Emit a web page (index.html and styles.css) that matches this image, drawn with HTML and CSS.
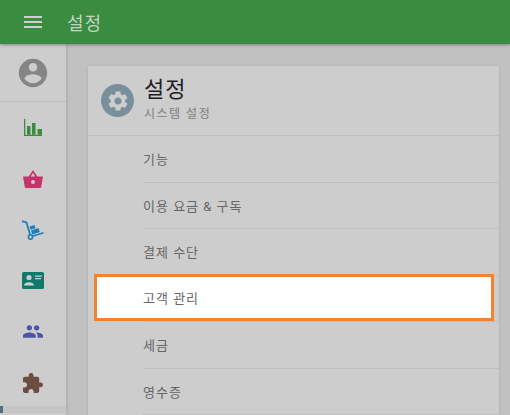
FILE: index.html
```html
<!DOCTYPE html>
<html lang="ko">
<head>
  <meta charset="UTF-8">
  <title>설정</title>
  <link rel="stylesheet" href="styles.css">
</head>
<body>

  <header class="topbar">
    <svg class="menu-icon" viewBox="0 0 24 24" width="24" height="24"><path d="M3 18h18v-2H3v2zm0-5h18v-2H3v2zm0-7v2h18V6H3z"/></svg>
    <span class="topbar-title">설정</span>
  </header>

  <div class="layout">
    <nav class="sidebar">
      <div class="side-profile">
        <svg viewBox="0 0 24 24" width="34" height="34" fill="#858585"><path d="M12 2C6.48 2 2 6.48 2 12s4.48 10 10 10 10-4.48 10-10S17.52 2 12 2zm0 3c1.66 0 3 1.34 3 3s-1.34 3-3 3-3-1.34-3-3 1.34-3 3-3zm0 14.2c-2.5 0-4.71-1.28-6-3.22.03-1.99 4-3.08 6-3.08s5.97 1.09 6 3.08c-1.29 1.94-3.5 3.22-6 3.22z"/></svg>
      </div>
      <a class="side-item">
        <svg viewBox="0 0 18 17" width="18" height="17" fill="#3a8c40"><path d="M0 0h1.300v15.700H18V17H0z"/><path d="M3 7h3.500v8.700H3zM8 4h3.500v11.700H8zM13.500 10H18v5.700h-4.500z"/></svg>
      </a>
      <a class="side-item">
        <svg viewBox="0 0 20 18" width="20" height="18" fill="#c8326b"><path d="M10 0 5.700 6.500H0L1.800 17c.1.600.6 1 1.200 1h14c.6 0 1.100-.4 1.200-1L20 6.500h-5.700zM10 3l2.200 3.500H7.800zm0 7a2 2 0 1 1 0 4 2 2 0 0 1 0-4z" fill-rule="evenodd"/></svg>
      </a>
      <a class="side-item">
        <svg viewBox="0 0 22 20" width="22" height="20" fill="#1f80bd"><path d="M0 1.200 4.500 2.400 8 14.500" fill="none" stroke="#1f80bd" stroke-width="1.800"/><path d="M10.300 16.200 21.500 12.700" fill="none" stroke="#1f80bd" stroke-width="1.600"/><circle cx="8.500" cy="17" r="2.100" fill="none" stroke="#1f80bd" stroke-width="1.600"/><path d="m7.500 6.500 5-1.500 1 3.200-5 1.500zM9 10.500l7.500-2.400 1.300 4-7.500 2.400z"/></svg>
      </a>
      <a class="side-item">
        <svg viewBox="0 0 22 17" width="22" height="17"><rect width="22" height="17" rx="1.500" fill="#0f7a6b"/><circle cx="7" cy="5.500" r="2.600" fill="#cdcdcd"/><path d="M2 13.500c0-2.200 3-3.300 5-3.300s5 1.100 5 3.300z" fill="#cdcdcd"/><path d="M13 3.500h7v1.200h-7zM13 6h6v1.200h-6z" fill="#cdcdcd"/></svg>
      </a>
      <a class="side-item">
        <svg viewBox="1 5 22 14" width="20" height="13" fill="#4a55a5"><path d="M16 11c1.660 0 2.990-1.340 2.990-3S17.660 5 16 5s-3 1.340-3 3 1.340 3 3 3zm-8 0c1.660 0 2.990-1.340 2.990-3S9.660 5 8 5 5 6.340 5 8s1.340 3 3 3zm0 2c-2.330 0-7 1.170-7 3.500V19h14v-2.500c0-2.330-4.670-3.500-7-3.500zm8 0c-.29 0-.62.020-.97.050 1.160.84 1.970 1.970 1.970 3.450V19h6v-2.500c0-2.330-4.670-3.500-7-3.500z"/></svg>
      </a>
      <a class="side-item">
        <svg viewBox="2 1 21 21" width="20" height="20" fill="#6d4c41"><path d="M20.500 11H19V7c0-1.100-.9-2-2-2h-4V3.500a2.500 2.500 0 0 0-5 0V5H4c-1.100 0-1.990.9-1.990 2v3.800H3.500c1.490 0 2.700 1.210 2.700 2.700s-1.210 2.700-2.700 2.700H2V20c0 1.100.9 2 2 2h3.800v-1.500c0-1.490 1.210-2.700 2.700-2.700s2.700 1.210 2.700 2.700V22H17c1.100 0 2-.9 2-2v-4h1.500a2.500 2.500 0 0 0 0-5z"/></svg>
      </a>
      <div class="side-foot"><span class="side-chip"></span></div>
    </nav>

    <main class="content">
      <section class="card">
        <div class="card-head">
          <div class="head-icon">
            <svg viewBox="0 0 24 24" width="24" height="24" fill="#cdcdcd"><path d="M19.140 12.940c.04-.3.060-.61.060-.94 0-.32-.02-.64-.07-.94l2.030-1.580a.49.49 0 0 0 .12-.61l-1.920-3.320a.49.49 0 0 0-.59-.22l-2.390.96c-.5-.38-1.030-.7-1.620-.94l-.36-2.540a.48.48 0 0 0-.48-.41h-3.840a.47.47 0 0 0-.47.410l-.36 2.540c-.59.240-1.130.57-1.620.94l-2.390-.96a.48.48 0 0 0-.59.220L2.740 8.870a.47.47 0 0 0 .12.610l2.030 1.580c-.05.3-.09.63-.09.94s.02.640.07.940l-2.030 1.580a.49.49 0 0 0-.12.610l1.920 3.320c.12.220.37.290.59.220l2.390-.96c.5.380 1.030.7 1.620.94l.36 2.540c.05.240.24.410.48.410h3.840c.24 0 .44-.17.47-.41l.36-2.540c.59-.24 1.130-.56 1.620-.94l2.390.96c.22.080.47 0 .59-.22l1.920-3.320a.47.47 0 0 0-.12-.61l-2.010-1.580zM12 15.600c-1.980 0-3.600-1.620-3.600-3.600s1.620-3.600 3.600-3.600 3.600 1.620 3.600 3.600-1.620 3.600-3.600 3.600z"/></svg>
          </div>
          <div class="head-text">
            <h1>설정</h1>
            <p>시스템 설정</p>
          </div>
        </div>
        <ul class="rows">
          <li class="row">기능</li>
          <li class="row">이용 요금 &amp; 구독</li>
          <li class="row">결제 수단</li>
          <li class="row row-active"><div class="row-box">고객 관리</div></li>
          <li class="row">세금</li>
          <li class="row">영수증</li>
        </ul>
      </section>
    </main>
  </div>

</body>
</html>
```

FILE: styles.css
```css
html, body { height: 100%; }
body { margin: 0; overflow: hidden; background: #c1c1c1; font-family: "Roboto", "Noto Sans CJK KR", sans-serif; }

.topbar { position: relative; z-index: 2; display: flex; align-items: center; height: 44px; background: #3a8c40; box-shadow: 0 1px 3px rgba(0, 0, 0, .35); }
.menu-icon { fill: #cfcfcf; margin-left: 21px; }
.topbar-title { margin-left: 22px; font-size: 18px; letter-spacing: 1px; color: #c6d2c6; }

.layout { display: flex; height: 371px; }

.sidebar { width: 66px; height: 371px; flex: none; background: #cdcdcd; box-shadow: 1px 0 3px rgba(0, 0, 0, .12); }
.side-profile { display: flex; align-items: center; justify-content: center; height: 57px; border-bottom: 1px solid #bdbdbd; }
.side-item { display: flex; align-items: center; justify-content: center; height: 51px; }
.side-foot { height: 7px; margin-top: -2px; background: #c5c5c5; }
.side-chip { display: block; width: 3px; height: 7px; background: #54717f; }

.content { flex: 1; padding: 22px 11px 0 22px; }
.card { height: 100%; background: #cdcdcd; box-shadow: 0 1px 3px rgba(0, 0, 0, .12); }
.card-head { display: flex; height: 69px; border-bottom: 1px solid #bdbdbd; }
.head-icon { display: flex; align-items: center; justify-content: center; width: 33px; height: 33px; margin: 18px 0 0 13px; border-radius: 50%; background: #78909c; }
.head-text { margin-left: 10px; padding-top: 11px; }
.head-text h1 { margin: 0; font-size: 22px; line-height: 26px; letter-spacing: 1px; font-weight: 400; color: #1f1f1f; }
.head-text p { margin: 3px 0 0; font-size: 12px; line-height: 16px; letter-spacing: 1.500px; color: #808080; }

.rows { margin: 0; padding: 0; list-style: none; }
.row { height: 45.500px; margin-left: 55px; border-bottom: 1px solid #bfbfbf; font-size: 13px; letter-spacing: 1px; line-height: 47px; color: #666; }
.row-active { position: relative; }
/* outline box sits over the row and its dividers */
.row-box { position: absolute; left: -49px; right: 5px; top: -1.500px; box-sizing: border-box; height: 47px; padding-left: 46px; border: 3px solid #f5822f; background: #fff; line-height: 43px; }
```
